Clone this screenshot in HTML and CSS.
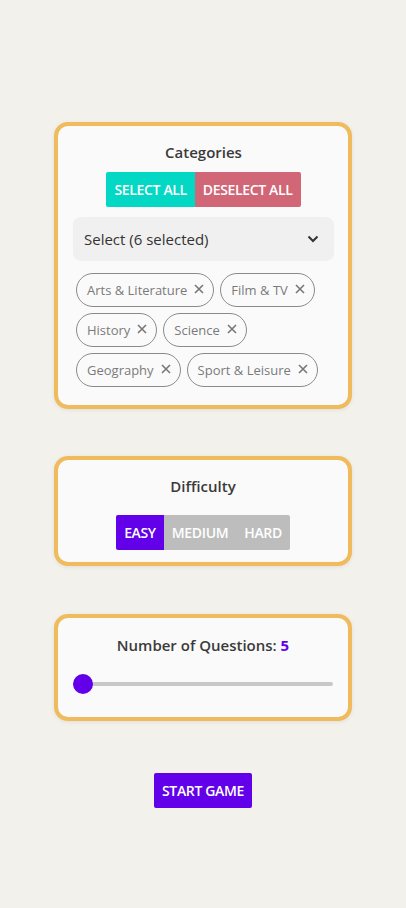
FILE: index.html
```html
<!DOCTYPE html>
<html>
<head>
<meta charset="utf-8">
<link rel="stylesheet" href="styles.css">
</head>
<body>
<main class="setup">
  <section class="card card-categories">
    <h2 class="card-title">Categories</h2>
    <div class="btn-group">
      <button class="btn btn-teal">SELECT ALL</button>
      <button class="btn btn-pink">DESELECT ALL</button>
    </div>
    <div class="select">
      <span>Select (6 selected)</span>
      <svg class="chevron" width="12" height="8" viewBox="0 0 12 8"><path d="M1.5 1.5 L6 6 L10.5 1.5" fill="none" stroke="#333" stroke-width="2"/></svg>
    </div>
    <div class="chips">
      <span class="chip">Arts &amp; Literature<svg class="x" viewBox="0 0 10 10"><path d="M1 1 L9 9 M9 1 L1 9" stroke="#777" stroke-width="1.6"/></svg></span>
      <span class="chip">Film &amp; TV<svg class="x" viewBox="0 0 10 10"><path d="M1 1 L9 9 M9 1 L1 9" stroke="#777" stroke-width="1.6"/></svg></span>
      <span class="chip">History<svg class="x" viewBox="0 0 10 10"><path d="M1 1 L9 9 M9 1 L1 9" stroke="#777" stroke-width="1.6"/></svg></span>
      <span class="chip">Science<svg class="x" viewBox="0 0 10 10"><path d="M1 1 L9 9 M9 1 L1 9" stroke="#777" stroke-width="1.6"/></svg></span>
      <span class="chip">Geography<svg class="x" viewBox="0 0 10 10"><path d="M1 1 L9 9 M9 1 L1 9" stroke="#777" stroke-width="1.6"/></svg></span>
      <span class="chip">Sport &amp; Leisure<svg class="x" viewBox="0 0 10 10"><path d="M1 1 L9 9 M9 1 L1 9" stroke="#777" stroke-width="1.6"/></svg></span>
    </div>
  </section>

  <section class="card card-difficulty">
    <h2 class="card-title">Difficulty</h2>
    <div class="btn-group">
      <button class="btn btn-purple">EASY</button>
      <button class="btn btn-grey">MEDIUM</button>
      <button class="btn btn-grey">HARD</button>
    </div>
  </section>

  <section class="card card-questions">
    <h2 class="card-title">Number of Questions: <span class="count">5</span></h2>
    <div class="slider">
      <div class="track"></div>
      <div class="thumb"></div>
    </div>
  </section>

  <button class="btn btn-purple start">START GAME</button>
</main>
</body>
</html>
```

FILE: styles.css
```css
* { box-sizing: border-box; }
html, body { margin: 0; padding: 0; }
body {
  background: #f2f1ec;
  font-family: "Open Sans", "Noto Sans", sans-serif;
  color: #333;
  width: 406px;
  height: 908px;
}
.setup {
  width: 298px;
  margin: 0 auto;
  padding-top: 122px;
  display: flex;
  flex-direction: column;
  align-items: stretch;
}
.card {
  background: #fafafa;
  border: 4px solid #f0bb5c;
  border-radius: 14px;
  box-shadow: 0 1px 4px rgba(0,0,0,0.08);
  display: flex;
  flex-direction: column;
  align-items: center;
}
.card-title {
  margin: 0;
  font-size: 15px;
  font-weight: 600;
  line-height: 20px;
  color: #3a3a3a;
}
.card-categories {
  padding: 16px 14px 18px 15px;
}
.card-categories .btn-group { margin-top: 10px; }
.btn-group { display: flex; }
.btn {
  border: none;
  font-family: inherit;
  font-size: 14px;
  font-weight: 600;
  letter-spacing: -0.35px;
  color: #fff;
  height: 35px;
  padding: 0 8px;
  line-height: 35px;
  border-radius: 0;
  cursor: pointer;
}
.btn-group .btn:first-child { border-radius: 2px 0 0 2px; }
.btn-group .btn:last-child { border-radius: 0 2px 2px 0; }
.btn-teal { background: #02d8c4; }
.btn-pink { background: #d16677; }
.btn-purple { background: #6200ea; }
.btn-grey { background: #bdbdbd; }

.select {
  margin-top: 10px;
  width: 100%;
  height: 44px;
  background: #f0f0f0;
  border-radius: 8px;
  display: flex;
  align-items: center;
  justify-content: space-between;
  padding: 0 15px 0 11px;
  font-size: 15px;
  color: #333;
}
.chips {
  margin-top: 12px;
  width: 100%;
  padding: 0 3px;
  display: flex;
  flex-wrap: wrap;
  gap: 6px;
}
.chip {
  display: inline-flex;
  align-items: center;
  height: 34px;
  border: 1px solid #8a8a8a;
  border-radius: 17px;
  padding: 0 9px 0 10px;
  font-size: 13px;
  color: #7a7a7a;
}
.chip .x {
  width: 10px;
  height: 10px;
  margin-left: 7px;
  margin-top: -2px;
}

.card-difficulty {
  margin-top: 47px;
  padding: 16px 15px 12px;
}
.card-difficulty .btn-group { margin-top: 19px; }

.card-questions {
  margin-top: 48px;
  padding: 17px 15px 23px;
}
.count { color: #6200ea; font-weight: 700; }
.slider {
  position: relative;
  margin-top: 19px;
  width: 100%;
  height: 20px;
  display: flex;
  align-items: center;
}
.track {
  width: 100%;
  height: 4px;
  background: #c8c8c8;
  border-radius: 2px;
}
.thumb {
  position: absolute;
  left: 0;
  top: 0;
  width: 20px;
  height: 20px;
  border-radius: 50%;
  background: #6200ea;
}
.start {
  align-self: center;
  margin-top: 52px;
  border-radius: 2px;
}
```
